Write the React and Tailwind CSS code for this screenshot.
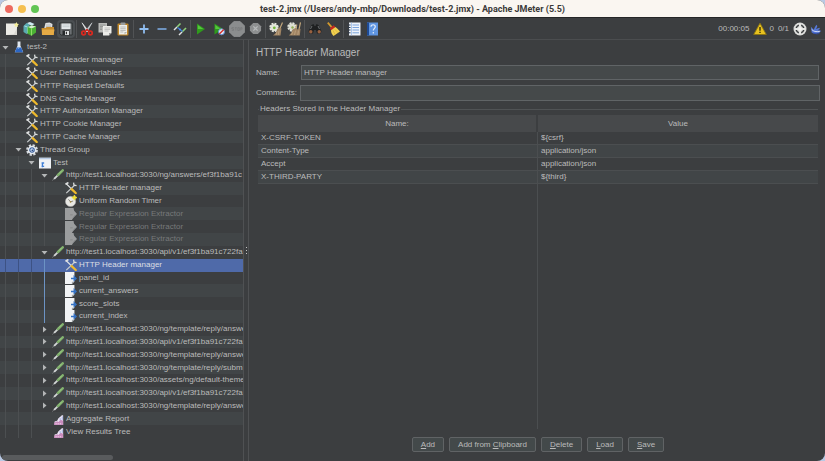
import { useState } from 'react';

const Svg = ({ size = 14, children }) => (
  <svg width={size} height={size} viewBox="0 0 14 14" fill="none" className="shrink-0" aria-hidden="true">
    {children}
  </svg>
);

/* Toolbar icons */
const NewIcon = () => (
  <Svg>
    <path d="M1 1.500h11v11.500h-11z" fill="#ecebe6" />
    <path d="M1 13h11v-7l-3 6z" fill="#d9d8d2" />
    <path d="M11.500 0l.8 1.700 1.700.2-1.200 1.400.2 1.800-1.600-.8-1.700.8.3-1.800-1.300-1.400 1.900-.2z" fill="#f4ee9a" />
  </Svg>
);
const TemplatesIcon = () => (
  <Svg>
    <path d="M.5 4l3-3 3 1v9l-3 1-3-2z" fill="#5aa9b0" />
    <path d="M4 1l3-1 4.500 2-3 2z" fill="#cfeaf2" />
    <path d="M1.500 4l3 1v6" stroke="#a9dde4" />
    <path d="M4.500 5l4-1.500 4.500 1v6l-4.500 3.200-4-2z" fill="#4bb234" />
    <path d="M5 5l3.500 1.500 4.500-2-4-1z" fill="#d9efce" />
    <path d="M8.500 6.500v7" stroke="#8fdc68" />
  </Svg>
);
const OpenIcon = () => (
  <Svg>
    <path d="M3 7l1.500-6 4-.5 3 1.500-.5 5z" fill="#dfe0df" />
    <path d="M5 3h5M5 4.500h5" stroke="#a9aaa8" strokeWidth=".6" />
    <path d="M.5 6h4l1-1h7.500v8h-12z" fill="#c98c2c" />
    <path d="M1 7.500h12.500l-1 5.500h-11.500z" fill="#e6ab45" />
  </Svg>
);
const SaveIcon = () => (
  <Svg>
    <path d="M.8 1h12.400v12h-11l-1.400-1.200z" fill="#6c7073" stroke="#25282a" strokeWidth=".8" />
    <path d="M2.500 1.500h9v5.500h-9z" fill="#e5eaec" />
    <path d="M3.500 3h7M3.500 4.700h7" stroke="#aebac0" strokeWidth=".6" />
    <path d="M3.500 8.500h7v4.500h-7z" fill="#26292b" />
    <path d="M6 9h4v4h-4z" fill="#dfe2e3" />
    <path d="M6.800 9.800h1.200v2.500h-1.200z" fill="#333" />
  </Svg>
);
const CutIcon = () => (
  <Svg>
    <path d="M2 .8l6.500 8.200-1.700.6z" fill="#eceff0" stroke="#eceff0" strokeWidth=".6" />
    <path d="M12 .8l-6.500 8.200 1.700.6z" fill="#cfd4d6" stroke="#cfd4d6" strokeWidth=".6" />
    <circle cx="3.600" cy="11" r="1.800" stroke="#d9291f" strokeWidth="1.700" />
    <circle cx="10.400" cy="11" r="1.800" stroke="#d9291f" strokeWidth="1.700" />
    <path d="M5 9.500l2-2 2 2" stroke="#c9211a" strokeWidth="1.500" />
  </Svg>
);
const CopyIcon = () => (
  <Svg>
    <path d="M.5 1h8.500v9.500h-8.500z" fill="#b9bab8" />
    <path d="M2 3h5.500M2 4.500h3M2 6h2M2 7.500h2" stroke="#858684" strokeWidth=".7" />
    <path d="M5 4h8.500v7l-2.500 2.500h-6z" fill="#ecece9" />
    <path d="M6.500 6h5.500M6.500 7.500h5.500M6.500 9h4" stroke="#aaa" strokeWidth=".6" />
    <path d="M11 13.500v-2.500h2.500z" fill="#999" />
  </Svg>
);
const PasteIcon = () => (
  <Svg>
    <rect x="1.500" y="1.500" width="11" height="12" rx="1" fill="#bd8529" />
    <path d="M3 3h8v9.500h-8z" fill="#edeeea" />
    <rect x="4.500" y=".5" width="5" height="2.500" rx=".8" fill="#9a9c9a" />
    <path d="M4.300 5h5.400M4.300 6.700h5.400M4.300 8.400h5.400M4.300 10h3" stroke="#a3a4a0" strokeWidth=".7" />
    <path d="M8.500 12.500v-2.500h2.500z" fill="#b1b1ab" />
  </Svg>
);
const PlusIcon = () => (
  <Svg>
    <path d="M7 2.500v9M2.500 7h9" stroke="#8fbdf0" strokeWidth="1.800" />
  </Svg>
);
const MinusIcon = () => (
  <Svg>
    <path d="M2.500 7h9" stroke="#7fb0ea" strokeWidth="1.700" />
  </Svg>
);
const ToggleIcon = () => (
  <Svg>
    <path d="M1 8l3-3" stroke="#dfe2e2" strokeWidth="1.400" />
    <path d="M4 5l3.500-3.500" stroke="#8fcf78" strokeWidth="1.600" />
    <path d="M6 13l3-3" stroke="#dfe2e2" strokeWidth="1.400" />
    <path d="M9 10l4-4" stroke="#8fcf78" strokeWidth="1.600" />
    <path d="M4.500 5.500l5 4" stroke="#3c78d8" strokeWidth="1.200" />
    <circle cx="7" cy="7.500" r="1" fill="#4b90ee" />
  </Svg>
);
const StartIcon = () => (
  <Svg>
    <path d="M3 1.500l8 5.500-8 5.500z" fill="#2f9a1c" />
    <path d="M3.800 3l5.500 4h-5.500z" fill="#55c73e" />
  </Svg>
);
const StartNoTimersIcon = () => (
  <Svg>
    <path d="M2.500 1.500l8.500 5.500-8.500 5.500z" fill="#2f9a1c" />
    <path d="M3.300 3l5.500 4h-5.500z" fill="#55c73e" />
    <circle cx="9.500" cy="9.800" r="3" fill="#dce7f6" stroke="#5b87cc" strokeWidth=".9" />
    <path d="M7.300 12l4.500-4.500" stroke="#d62b24" strokeWidth="1.200" />
  </Svg>
);
const StopIcon = () => (
  <Svg size={16}>
    <path d="M4.200.5h5.600l3.700 3.700v5.600l-3.700 3.700h-5.600l-3.700-3.700v-5.600z" fill="#8b8d8e" stroke="#989a9b" strokeWidth=".6" />
    <path d="M2.500 5.800h2M2.500 5.800v1.200h1.500v1.300h-1.500M5.200 5.800h1.600M6 5.800v2.500M7.700 5.800h1.400v2.500h-1.400zM10.200 8.300v-2.500h1.200v1.300h-1.200" stroke="#76787a" strokeWidth=".6" />
  </Svg>
);
const ShutdownIcon = () => (
  <Svg size={13}>
    <path d="M4.500 1h5l3.500 3.500v5l-3.500 3.500h-5l-3.500-3.500v-5z" fill="#8d8f90" />
    <path d="M4.700 4.700l4.600 4.600M9.300 4.700l-4.600 4.600" stroke="#b7b9ba" strokeWidth="1.400" />
  </Svg>
);
const ClearIcon = () => (
  <Svg>
    <circle cx="5" cy="5.500" r="3.800" stroke="#e5e7df" strokeWidth="1.800" strokeDasharray="2 .985" />
    <circle cx="5" cy="5.500" r="3.600" fill="#e2e4da" />
    <circle cx="5.300" cy="5.800" r="1.400" fill="#6fb53a" />
    <path d="M13.500.5l-3 7" stroke="#c3a77c" strokeWidth="1.200" />
    <path d="M8.500 7l1.500-1.500 2.500 1-1 7h-7.500c2-1.500 3.500-3 4.500-6.500z" fill="#a08463" />
    <path d="M8 9.500l-1 3.500M10 8.500l-.7 4.500" stroke="#c4ab88" strokeWidth=".7" />
  </Svg>
);
const ClearAllIcon = () => (
  <Svg>
    <circle cx="5" cy="5" r="3.800" stroke="#e5e7df" strokeWidth="1.800" strokeDasharray="2 .985" />
    <circle cx="5" cy="5" r="3.400" fill="#dcded3" />
    <circle cx="5.500" cy="5.500" r="1.200" fill="#8fae52" />
    <path d="M13.500.5l-1.500 7M9.800 2.500l-1.300 5" stroke="#c3a77c" strokeWidth="1.200" />
    <path d="M5.500 7.500l3-1.500 2 1.500 2-1 1 .5-.7 6.500h-11c2-1.500 3-3 3.700-6z" fill="#a08463" />
    <path d="M6 9.500l-1.500 3.500M8.500 8.500l-1 4.500M11.500 8.500l-.7 4.500" stroke="#c4ab88" strokeWidth=".7" />
  </Svg>
);
const SearchIcon = () => (
  <Svg>
    <path d="M3.500 3l2-1 1 2h1l1-2 2 1 3 6-1 2.500h-3.500l-1-3.500h-2l-1 3.500h-3.500l-1-2.500z" fill="#1e2021" />
    <circle cx="2.800" cy="9.700" r="1.700" fill="#9a6140" />
    <circle cx="11.200" cy="9.700" r="1.700" fill="#9a6140" />
    <path d="M4 4l-1.500 3M10 4l1.500 3" stroke="#75787a" strokeWidth=".9" />
  </Svg>
);
const BroomIcon = () => (
  <Svg>
    <path d="M1.800.6l3.800 4.500" stroke="#d49a2c" strokeWidth="1.700" />
    <path d="M3.800 6.200l4-3 1.700 2.200-4.200 3z" fill="#c8281e" />
    <path d="M5 8.200l4.500-3.200c1.500 1 3 2.500 4.500 4.500l-6.500 4.500c-1.500-1.500-2.500-3.500-2.500-5.800z" fill="#f0d050" />
    <path d="M7 8.500l2 4M9 7.500l3 3.200" stroke="#d3a930" strokeWidth=".6" />
  </Svg>
);
const FunctionIcon = () => (
  <Svg>
    <path d="M2 .5h11.500v13h-11.500z" fill="#eef3fa" />
    <path d="M4.500 .5v13" stroke="#8fb5e6" strokeWidth=".7" />
    <path d="M5.500 3h6.500M5.500 5.500h6.500M5.500 8h6.500M5.500 10.800h6.500" stroke="#6d9cda" strokeWidth=".9" />
    <path d="M.8 3h2.700M.8 5.500h2.700M.8 8h2.700M.8 10.800h2.700" stroke="#2e3b4c" strokeWidth="1" />
  </Svg>
);
const HelpIcon = () => (
  <Svg>
    <path d="M2 .5h11v13h-11z" fill="#5f95e2" />
    <path d="M2 .5h2v13h-2z" fill="#1e4a94" />
    <path d="M6 4.800c0-2.800 4.300-2.600 4.300 0 0 1.700-2 1.700-2 3.700M8.300 10v1.500" stroke="#dfeafb" strokeWidth="1.200" />
  </Svg>
);

/* Status icons */
const WarningIcon = () => (
  <Svg>
    <path d="M7 1.200l6.300 11.300h-12.600z" fill="#e8c21f" stroke="#8d7512" strokeWidth=".9" strokeLinejoin="round" />
    <path d="M7 5v3.700M7 9.800v1.300" stroke="#35300f" strokeWidth="1.400" />
  </Svg>
);
const RemoteIcon = () => (
  <Svg>
    <circle cx="7" cy="7" r="6.500" fill="#dcdddb" />
    <circle cx="7" cy="7" r="3.800" stroke="#393c3e" strokeWidth="1.500" />
    <path d="M7 2v10M2 7h10" stroke="#e6e7e5" strokeWidth="2.200" />
    <circle cx="7" cy="7" r="1.800" fill="#f2f2f0" />
  </Svg>
);
const FeatherIcon = () => (
  <Svg size={12}>
    <path d="M1 4.500l3.500 3.500c.5-2 1.500-4.500 3.500-6l.5 2-1.500 3 4-1.500.5 1.500-2.500 1.500 4 .5-2 2.500c-3.500 1.500-6.500 1-9-.5z" fill="#5577d6" />
    <path d="M2 7.500c2 2.500 5 3 9.500 2.200" stroke="#d5def8" strokeWidth="1.100" />
    <path d="M3 11.500l5 1.300 3-.6" stroke="#2e4cae" strokeWidth=".9" />
  </Svg>
);

/* Tree icons */
const FlaskIcon = () => (
  <Svg size={12}>
    <path d="M5.300.5h3.400v5l3.300 7.500h-10l3.300-7.500z" fill="#dfe6ee" />
    <path d="M4.500 7.500h5l2.300 5.700h-9.600z" fill="#2b66c4" />
    <path d="M5.500 9l2-1" stroke="#8db7ee" strokeWidth="1" />
  </Svg>
);
const ToolsIcon = () => (
  <Svg size={12}>
    <path d="M11.500 3.500l-10 9.500" stroke="#c7cacb" strokeWidth="1.500" />
    <path d="M10 .8l.5 3 3 .4" stroke="#d9dcdc" strokeWidth="1.500" />
    <path d="M1.500 2l5.500 5.500" stroke="#e3e5e5" strokeWidth="1.400" />
    <path d="M.5 2.500l3.500-1.800" stroke="#dfe1e1" strokeWidth="2" />
    <path d="M7.800 8.300l4.700 4.500" stroke="#eeb92c" strokeWidth="2.700" strokeLinecap="round" />
  </Svg>
);
const GearIcon = () => (
  <Svg size={12}>
    <circle cx="7" cy="7" r="5.600" stroke="#d4d9de" strokeWidth="2.600" strokeDasharray="2.600 1.800" />
    <circle cx="7" cy="7" r="5" fill="#e6eaee" />
    <circle cx="7" cy="7" r="2.600" fill="#d3e0f2" stroke="#3a5f9c" strokeWidth="1.300" />
    <circle cx="7.400" cy="7.400" r="1" fill="#284a83" />
  </Svg>
);
const ControllerIcon = () => (
  <Svg size={12}>
    <path d="M0 1h14v12.500h-14z" fill="#eff2f5" />
    <path d="M0 1h14v1.600h-14z" fill="#b9cce6" />
    <path d="M4 6v6M3 7h3M3 11h3" stroke="#3f7fd6" strokeWidth="1.600" />
  </Svg>
);
const SamplerIcon = () => (
  <Svg size={12}>
    <path d="M.5 13.500l3-3.500" stroke="#85898a" strokeWidth="1" />
    <path d="M2.500 11.500l5-5" stroke="#d2d5d5" strokeWidth="2.200" />
    <path d="M7 7l5.500-5.500" stroke="#7fae6c" strokeWidth="3" strokeLinecap="round" />
    <path d="M8 5.500l3.500-3.500" stroke="#a8d68f" strokeWidth=".8" />
  </Svg>
);
const TimerIcon = () => (
  <Svg size={12}>
    <circle cx="6.500" cy="7.500" r="6" fill="#e8e8e4" stroke="#aaa" strokeWidth=".6" />
    <path d="M4 5l2.500 3 3-1" stroke="#85837c" strokeWidth="1.100" />
    <circle cx="6.500" cy="8" r="1" fill="#a8893f" />
    <path d="M11 0l1 2 2 1-2 1-1 2-1-2-2-1 2-1z" fill="#f1df37" stroke="#f1df37" />
  </Svg>
);
const DisabledExtractorIcon = () => (
  <Svg size={12}>
    <path d="M0 0h10l.5 3 3.500 4-4 4-2 3h-8z" fill="#9b9d9e" />
    <path d="M6 8h3M9 12l3-4" stroke="#838586" strokeWidth="1" />
  </Svg>
);
const ExtractorIcon = () => (
  <Svg size={12}>
    <path d="M0 0h11v11l-3 3h-8z" fill="#f1f3f5" />
    <path d="M7 7.500h4" stroke="#3572c4" strokeWidth="1.800" />
    <path d="M10 3.500l4 4-4 4z" fill="#3572c4" />
    <path d="M8 14v-2.500h2.500z" fill="#a4a8ab" />
  </Svg>
);
const ReportIcon = () => (
  <Svg size={12}>
    <path d="M3 14v-4l3-1 1.500-3 2.500-2 1.500-1.500h1.500v11.500z" fill="#ece4f3" />
    <path d="M2.500 14v-2.500l3.500-2 1.500 1 2.500-2.500 3 1v5z" fill="#c98bbd" />
    <path d="M9.500 6v2.500M12 4v4" stroke="#8fa6e0" strokeWidth="1" />
    <path d="M4 12.500h8" stroke="#f2d3ea" strokeWidth="1.200" strokeDasharray="1.500 1" />
  </Svg>
);

const toolbar = [
  [['New', NewIcon], ['Templates', TemplatesIcon], ['Open', OpenIcon], ['Save', SaveIcon]],
  [['Cut', CutIcon], ['Copy', CopyIcon], ['Paste', PasteIcon]],
  [['Expand All', PlusIcon], ['Collapse All', MinusIcon], ['Toggle', ToggleIcon]],
  [['Start', StartIcon], ['Start no pauses', StartNoTimersIcon], ['Stop', StopIcon], ['Shutdown', ShutdownIcon]],
  [['Clear', ClearIcon], ['Clear All', ClearAllIcon]],
  [['Search', SearchIcon], ['Reset Search', BroomIcon]],
  [['Function Helper', FunctionIcon], ['Help', HelpIcon]],
];

const tree = [
  { level: 0, label: 'test-2', icon: FlaskIcon, open: true },
  { level: 1, label: 'HTTP Header manager', icon: ToolsIcon },
  { level: 1, label: 'User Defined Variables', icon: ToolsIcon },
  { level: 1, label: 'HTTP Request Defaults', icon: ToolsIcon },
  { level: 1, label: 'DNS Cache Manager', icon: ToolsIcon },
  { level: 1, label: 'HTTP Authorization Manager', icon: ToolsIcon },
  { level: 1, label: 'HTTP Cookie Manager', icon: ToolsIcon },
  { level: 1, label: 'HTTP Cache Manager', icon: ToolsIcon },
  { level: 1, label: 'Thread Group', icon: GearIcon, open: true },
  { level: 2, label: 'Test', icon: ControllerIcon, open: true },
  { level: 3, label: 'http://test1.localhost:3030/ng/answers/ef3f1ba91c', icon: SamplerIcon, open: true },
  { level: 4, label: 'HTTP Header manager', icon: ToolsIcon },
  { level: 4, label: 'Uniform Random Timer', icon: TimerIcon },
  { level: 4, label: 'Regular Expression Extractor', icon: DisabledExtractorIcon, disabled: true },
  { level: 4, label: 'Regular Expression Extractor', icon: DisabledExtractorIcon, disabled: true },
  { level: 4, label: 'Regular Expression Extractor', icon: DisabledExtractorIcon, disabled: true },
  { level: 3, label: 'http://test1.localhost:3030/api/v1/ef3f1ba91c722fa', icon: SamplerIcon, open: true },
  { level: 4, label: 'HTTP Header manager', icon: ToolsIcon, active: true },
  { level: 4, label: 'panel_id', icon: ExtractorIcon, active: true },
  { level: 4, label: 'current_answers', icon: ExtractorIcon, active: true },
  { level: 4, label: 'score_slots', icon: ExtractorIcon, active: true },
  { level: 4, label: 'current_index', icon: ExtractorIcon, active: true },
  { level: 3, label: 'http://test1.localhost:3030/ng/template/reply/answe', icon: SamplerIcon, open: false },
  { level: 3, label: 'http://test1.localhost:3030/api/v1/ef3f1ba91c722fa', icon: SamplerIcon, open: false },
  { level: 3, label: 'http://test1.localhost:3030/ng/template/reply/answe', icon: SamplerIcon, open: false },
  { level: 3, label: 'http://test1.localhost:3030/ng/template/reply/subm', icon: SamplerIcon, open: false },
  { level: 3, label: 'http://test1.localhost:3030/assets/ng/default-theme', icon: SamplerIcon, open: false },
  { level: 3, label: 'http://test1.localhost:3030/api/v1/ef3f1ba91c722fa', icon: SamplerIcon, open: false },
  { level: 3, label: 'http://test1.localhost:3030/ng/template/reply/answe', icon: SamplerIcon, open: false },
  { level: 3, label: 'Aggregate Report', icon: ReportIcon },
  { level: 3, label: 'View Results Tree', icon: ReportIcon },
];

const headers = [
  ['X-CSRF-TOKEN', '${csrf}'],
  ['Content-Type', 'application/json'],
  ['Accept', 'application/json'],
  ['X-THIRD-PARTY', '${third}'],
];

// [before, mnemonic, after]
const actions = [
  ['', 'A', 'dd'],
  ['Add from ', 'C', 'lipboard'],
  ['', 'D', 'elete'],
  ['', 'L', 'oad'],
  ['', 'S', 'ave'],
];

const Arrow = ({ open }) => (
  <svg width="7" height="7" viewBox="0 0 7 7" fill="#b4b6b7" aria-hidden="true">
    {open ? <path d="M.5 2h6l-3 3.500z" /> : <path d="M2 .5l3.500 3-3.500 3z" />}
  </svg>
);

const TreeRow = ({ node, index, selected, onSelect }) => {
  const Icon = node.icon;
  const stripe = index % 2 ? 'bg-[#414547]' : '';
  return (
    <button
      type="button"
      onClick={() => onSelect(index)}
      className={`flex w-full min-h-0 items-center text-left whitespace-nowrap ${selected ? 'bg-[#4f6aa9]' : stripe}`}
    >
      {Array.from({ length: node.level }, (_, i) => (
        <span key={i} className="w-[13px] shrink-0 self-stretch flex pl-[5px]">
          {node.active && i === 3 ? (
            <span className="border-l border-[#6c93c4]" />
          ) : (
            <span className={`border-l ${selected ? 'border-[#3d5284]' : 'border-[#4c4f51]'}`} />
          )}
        </span>
      ))}
      <span className="w-[13px] shrink-0 flex pl-[2px]">
        {node.open !== undefined && <Arrow open={node.open} />}
      </span>
      <Icon />
      <span className={`pl-[2px] ${selected ? 'text-[#dcdfe4]' : node.disabled ? 'text-[#77797a]' : 'text-[#bbbbbb]'}`}>
        {node.label}
      </span>
    </button>
  );
};

const App = () => {
  const [selected, setSelected] = useState(17);
  const [name, setName] = useState('HTTP Header manager');
  const [comments, setComments] = useState('');

  return (
    <div className="h-screen bg-[#b9c9e4]">
      <div className="h-full flex flex-col overflow-hidden rounded-lg bg-[#3c3e40] font-['Liberation_Sans',sans-serif] text-[8px] leading-[10px] text-[#bbbbbb]">
        {/* Title bar */}
        <header className="h-[17px] shrink-0 grid grid-cols-[1fr_auto_1fr] items-center bg-[#faf6f1]">
          <div className="flex gap-[5px] pl-[5px]">
            <span className="size-2 rounded-full bg-[#ed6a5f]" />
            <span className="size-2 rounded-full bg-[#f5bf4f]" />
            <span className="size-2 rounded-full bg-[#62c554]" />
          </div>
          <h1 className="font-['Roboto',sans-serif] text-[9px] font-bold text-[#3b3a39]">
            test-2.jmx (/Users/andy-mbp/Downloads/test-2.jmx) - Apache JMeter (5.5)
          </h1>
        </header>

        {/* Toolbar */}
        <div className="h-[23px] shrink-0 flex items-center border-t border-b border-t-[#252627] border-b-[#4b4d4f] pl-[3px] pr-[3px]">
          {toolbar.map((group, g) => (
            <div key={g} className={`flex items-center ${g > 0 ? 'border-l border-[#515355] ml-px pl-px' : ''}`}>
              {group.map(([label, Icon]) => (
                <button
                  key={label}
                  type="button"
                  aria-label={label}
                  className={`w-[18px] h-[18px] flex items-center justify-center rounded-sm ${label === 'Save' ? 'bg-[#4b4f52]' : ''}`}
                >
                  <Icon />
                </button>
              ))}
            </div>
          ))}
          <div className="ml-auto flex items-center">
            <span className="pr-1">00:00:05</span>
            <WarningIcon />
            <span className="pl-[2px] pr-1">0</span>
            <span className="pr-1">0/1</span>
            <RemoteIcon />
            <span className="pl-[3px]"><FeatherIcon /></span>
          </div>
        </div>

        <div className="flex-1 min-h-0 flex">
          {/* Test plan tree */}
          <nav className="w-[244px] shrink-0 flex flex-col overflow-hidden border-r border-[#4f5153]">
            <div className="h-[397px] mt-px grid auto-rows-fr">
              {tree.map((node, i) => (
                <TreeRow key={i} node={node} index={i} selected={i === selected} onSelect={setSelected} />
              ))}
            </div>
            <div className="mt-auto mb-px ml-[2px] w-[111px] h-[5px] rounded-full bg-[#595b5d]" />
          </nav>
          <div className="w-[5px] shrink-0 flex flex-col items-center justify-center gap-[2px] border-r border-[#4f5153]">
            <span className="size-px bg-[#c5c6c7]" />
            <span className="size-px bg-[#c5c6c7]" />
            <span className="size-px bg-[#c5c6c7]" />
          </div>

          {/* Header manager panel */}
          <main className="flex-1 min-w-0 flex flex-col pl-[7px] pr-[5px] pt-[6px] pb-[9px]">
            <h2 className="text-[10px] leading-[14px]">HTTP Header Manager</h2>
            <div className="flex items-center mt-[5px] pr-px">
              <label htmlFor="name" className="w-[45px] shrink-0">Name:</label>
              <input
                id="name"
                value={name}
                onChange={(e) => setName(e.target.value)}
                className="flex-1 min-w-0 h-[15px] px-[2px] bg-[#45494a] border border-[#606466] outline-none"
              />
            </div>
            <div className="flex items-center mt-[5px]">
              <label htmlFor="comments" className="w-[44px] shrink-0">Comments:</label>
              <input
                id="comments"
                value={comments}
                onChange={(e) => setComments(e.target.value)}
                className="flex-1 min-w-0 h-4 px-[2px] bg-[#45494a] border border-[#606466] outline-none"
              />
            </div>
            <fieldset className="flex-1 min-h-0 min-w-0 flex flex-col mt-[3px] ml-[2px] mr-[2px] border-t border-[#505355]">
              <legend className="ml-px px-px">Headers Stored in the Header Manager</legend>
              <table className="w-full flex-1 mt-px table-fixed border-separate border-spacing-0">
                <thead>
                  <tr className="h-[17px]">
                    <th className="bg-[#47494b] border-r-2 border-[#3c3e40] font-normal">Name:</th>
                    <th className="bg-[#47494b] font-normal">Value</th>
                  </tr>
                </thead>
                <tbody>
                  {headers.map(([key, value], i) => (
                    <tr key={key} className={`h-[13px] ${i % 2 ? 'bg-[#414547]' : ''}`}>
                      <td className="px-[3px] border-b border-r border-[#4b4e50]">{key}</td>
                      <td className="px-[3px] border-b border-[#4b4e50]">{value}</td>
                    </tr>
                  ))}
                  <tr>
                    <td className="border-r border-[#4b4e50]" />
                    <td />
                  </tr>
                </tbody>
              </table>
            </fieldset>
            <div className="flex justify-center gap-[5px] mt-2">
              {actions.map(([before, key, after]) => (
                <button
                  key={before + key + after}
                  type="button"
                  className="h-[15px] px-2 flex items-center justify-center bg-[#43494a] border border-[#606365] rounded-xs whitespace-pre"
                >
                  {before}<span className="underline">{key}</span>{after}
                </button>
              ))}
            </div>
          </main>
        </div>
      </div>
    </div>
  );
};

export default App;
